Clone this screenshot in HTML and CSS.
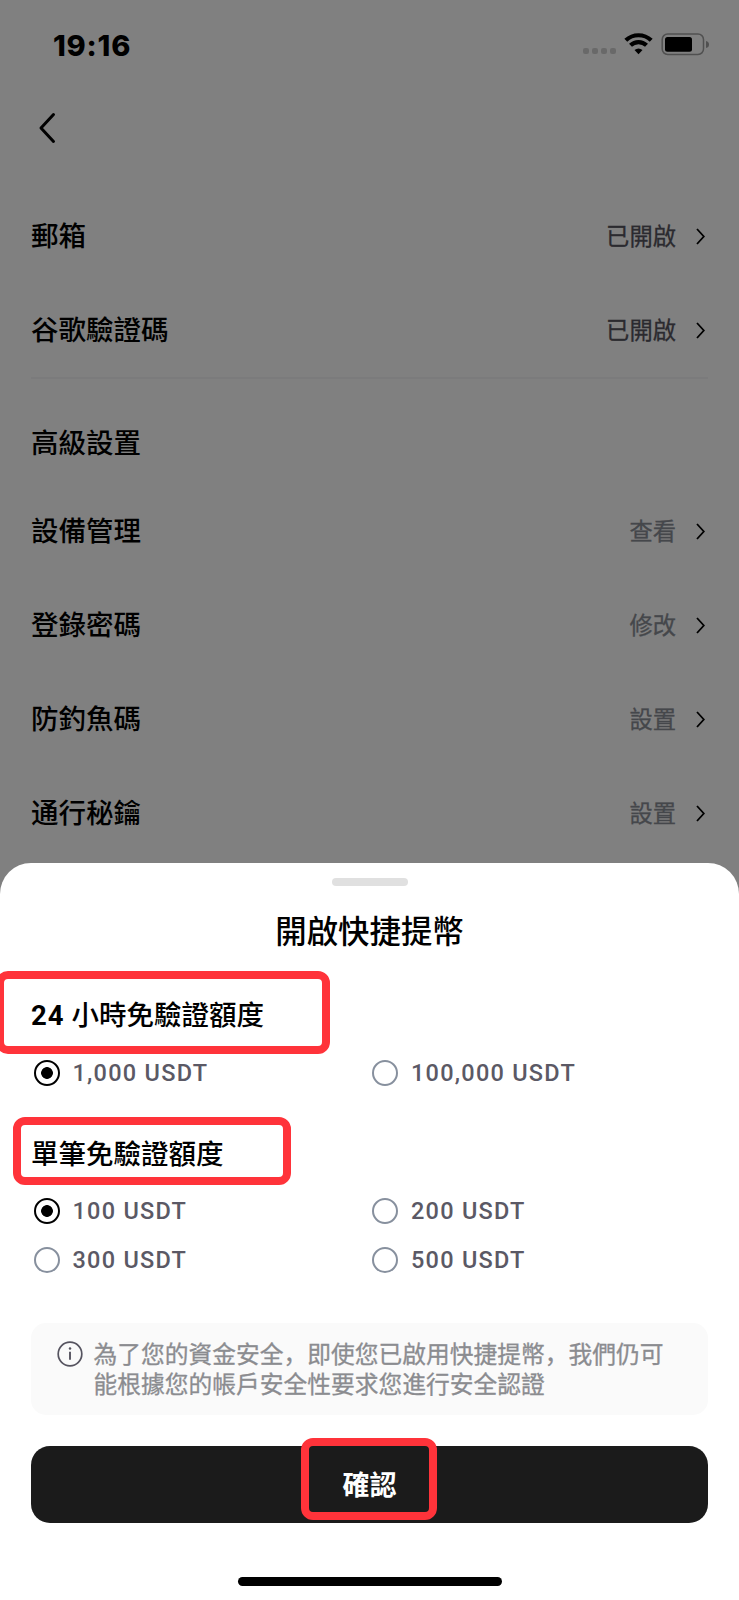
FILE: index.html
```html
<!DOCTYPE html>
<html lang="zh-Hans">
<head>
<meta charset="utf-8">
<title>開啟快捷提幣</title>
<link rel="stylesheet" href="styles.css">
</head>
<body>
<div class="screen">
  <header class="status">
    <span class="time">19:16</span>
    <svg class="status-icons" width="128" height="24" viewBox="0 0 128 24">
      <g fill="#696969"><rect x="1" y="16" width="6" height="6" rx="2"/><rect x="10" y="16" width="6" height="6" rx="2"/><rect x="19" y="16" width="6" height="6" rx="2"/><rect x="28" y="16" width="6" height="6" rx="2"/></g>
      <g fill="none" stroke="#000" stroke-width="4.2"><path d="M43.8 8.3A18.5 18.5 0 0 1 69.2 8.3"/><path d="M48.5 13.3A11.5 11.5 0 0 1 64.500 13.3"/></g>
      <path d="M52.500 18.100Q56.500 14.900 60.500 18.100L56.500 22.300Z"/>
      <rect x="80.200" y="2" width="41.300" height="20.500" rx="5.500" fill="none" stroke="#505050" stroke-width="1.500"/>
      <rect x="83" y="5" width="27" height="14.700" rx="2.500"/>
      <path d="M124 9Q127 9.500 127 12.500T124 16Z" fill="#505050"/>
    </svg>
  </header>
  <nav class="nav">
    <svg width="18" height="32" viewBox="0 0 18 32"><path d="M15.500 2.500L3 16L15.500 29.500" fill="none" stroke="#000" stroke-width="3" stroke-linecap="round" stroke-linejoin="round"/></svg>
  </nav>
  <main class="settings">
    <div class="row"><span class="label">郵箱</span><span class="value on">已開啟</span><svg class="chev" viewBox="0 0 9 17"><path d="M1 1L7.800 8.500L1 16"/></svg></div>
    <div class="row"><span class="label">谷歌驗證碼</span><span class="value on">已開啟</span><svg class="chev" viewBox="0 0 9 17"><path d="M1 1L7.800 8.500L1 16"/></svg></div>
    <h2 class="group label">高級設置</h2>
    <div class="row"><span class="label">設備管理</span><span class="value">查看</span><svg class="chev" viewBox="0 0 9 17"><path d="M1 1L7.800 8.500L1 16"/></svg></div>
    <div class="row"><span class="label">登錄密碼</span><span class="value">修改</span><svg class="chev" viewBox="0 0 9 17"><path d="M1 1L7.800 8.500L1 16"/></svg></div>
    <div class="row"><span class="label">防釣魚碼</span><span class="value">設置</span><svg class="chev" viewBox="0 0 9 17"><path d="M1 1L7.800 8.500L1 16"/></svg></div>
    <div class="row"><span class="label">通行秘鑰</span><span class="value">設置</span><svg class="chev" viewBox="0 0 9 17"><path d="M1 1L7.800 8.500L1 16"/></svg></div>
  </main>

  <section class="sheet">
    <div class="handle"></div>
    <h1 class="title">開啟快捷提幣</h1>
    <h3 class="limit daily label"><b>24</b> 小時免驗證額度<i class="mark mark-daily"></i></h3>
    <div class="options">
      <div class="option checked"><i class="radio"></i>1,000 USDT</div>
      <div class="option"><i class="radio"></i>100,000 USDT</div>
    </div>
    <h3 class="limit single label">單筆免驗證額度<i class="mark mark-single"></i></h3>
    <div class="options">
      <div class="option checked"><i class="radio"></i>100 USDT</div>
      <div class="option"><i class="radio"></i>200 USDT</div>
      <div class="option"><i class="radio"></i>300 USDT</div>
      <div class="option"><i class="radio"></i>500 USDT</div>
    </div>
    <div class="notice">
      <svg width="26" height="26" viewBox="0 0 26 26"><circle cx="13" cy="13" r="11.800" fill="none" stroke="#55535f" stroke-width="1.700"/><path d="M13 10.800V18.800" stroke="#55535f" stroke-width="1.900"/><circle cx="13" cy="7.600" r="1.250" fill="#55535f"/></svg>
      <p>為了您的資金安全，即使您已啟用快捷提幣，我們仍可<br>能根據您的帳戶安全性要求您進行安全認證</p>
    </div>
    <div class="confirm">確認<i class="mark mark-confirm"></i></div>
    <div class="home"></div>
  </section>
</div>
</body>
</html>
```
FILE: styles.css
```css
* { box-sizing: border-box; }
body {
  margin: 0;
  font-family: "Noto Sans CJK SC", sans-serif;
}
.screen {
  position: relative;
  width: 739px;
  height: 1600px;
  overflow: hidden;
  background: #808080;
  color: #000;
}
.status {
  height: 88px;
  padding: 0 29px 0 53px;
  display: flex;
  align-items: center;
  justify-content: space-between;
}
.time {
  padding-top: 2px;
  font: 800 29px/1 Inter, sans-serif;
  letter-spacing: .8px;
}
.nav {
  height: 81px;
  padding: 0 0 1px 38px;
  display: flex;
  align-items: center;
}
.settings { padding: 20px 31px 0 31px; }
.row {
  height: 94px;
  display: flex;
  align-items: center;
}
.label {
  margin: 0;
  padding-bottom: 4px;
  font-size: 27.5px;
  font-weight: 500;
  line-height: 36px;
}
.value {
  margin-left: auto;
  padding-bottom: 2px;
  font-size: 23.3px;
  line-height: 34px;
  font-weight: 400;
  color: #45474b;
  -webkit-text-stroke: .3px currentColor;
}
.value.on { color: #2b2a2f; }
.chev {
  width: 9px;
  height: 17px;
  margin: 0 3.5px 0 19.5px;
  fill: none;
  stroke: #000;
  stroke-width: 1.8;
}
.group {
  height: 107px;
  padding-top: 44px;
  border-top: 2px solid #7b7b7c;
}
.sheet {
  position: absolute;
  left: 0;
  right: 0;
  bottom: 0;
  height: 737px;
  padding: 15px 31px 0;
  border-radius: 31px 31px 0 0;
  background: #fff;
  display: flex;
  flex-direction: column;
}
.handle {
  width: 76px;
  height: 8px;
  margin: 0 auto;
  border-radius: 4px;
  background: #e0e0e0;
}
.title {
  margin: 21px 0 0;
  text-align: center;
  font-size: 31.4px;
  font-weight: 500;
  line-height: 46px;
}
.limit { position: relative; height: 40px; }
.limit b {
  margin-right: 1px;
  font-family: Roboto, sans-serif;
  font-weight: 700;
  line-height: 1;
  letter-spacing: .9px;
}
.daily { margin-top: 42px; }
.single { margin-top: 41px; }
.options {
  display: grid;
  grid-template-columns: 1fr 1fr;
  row-gap: 8.5px;
  margin-top: 17.5px;
}
.option {
  height: 40px;
  display: flex;
  align-items: center;
  gap: 13px;
  padding-left: 2.5px;
  font: 500 23.5px/38px Roboto, sans-serif;
  letter-spacing: 1.25px;
  color: #5b5965;
}
.radio {
  width: 26px;
  height: 26px;
  border: 2px solid #87909e;
  border-radius: 50%;
}
.checked .radio {
  border-color: #000;
  background: radial-gradient(circle, #000 5.5px, transparent 6.2px);
}
.notice {
  height: 92px;
  margin-top: 43px;
  padding: 15px 0 0 26px;
  border-radius: 15px;
  background: #fafafa;
  display: flex;
  gap: 10.5px;
}
.notice svg { margin-top: 3px; flex: none; }
.notice p {
  margin: 0;
  white-space: nowrap;
  font-size: 23.75px;
  line-height: 30.4px;
  color: #8b8c90;
  -webkit-text-stroke: .3px currentColor;
}
.confirm {
  position: relative;
  height: 77px;
  margin-top: 31px;
  border-radius: 19px;
  background: #1b1b1b;
  color: #fff;
  text-align: center;
  font-size: 27px;
  font-weight: 700;
  line-height: 75px;
}
.mark {
  position: absolute;
  border: 8px solid #ff333a;
  border-radius: 12px;
}
.mark-daily { left: -35px; top: -24px; width: 333.5px; height: 82.5px; }
.mark-single { left: -18px; top: -17px; width: 278px; height: 68px; }
.mark-confirm { left: 270px; top: -8px; width: 136px; height: 82px; }
.home {
  width: 264px;
  height: 9px;
  margin: 54px auto 0;
  border-radius: 5px;
  background: #000;
}
```
